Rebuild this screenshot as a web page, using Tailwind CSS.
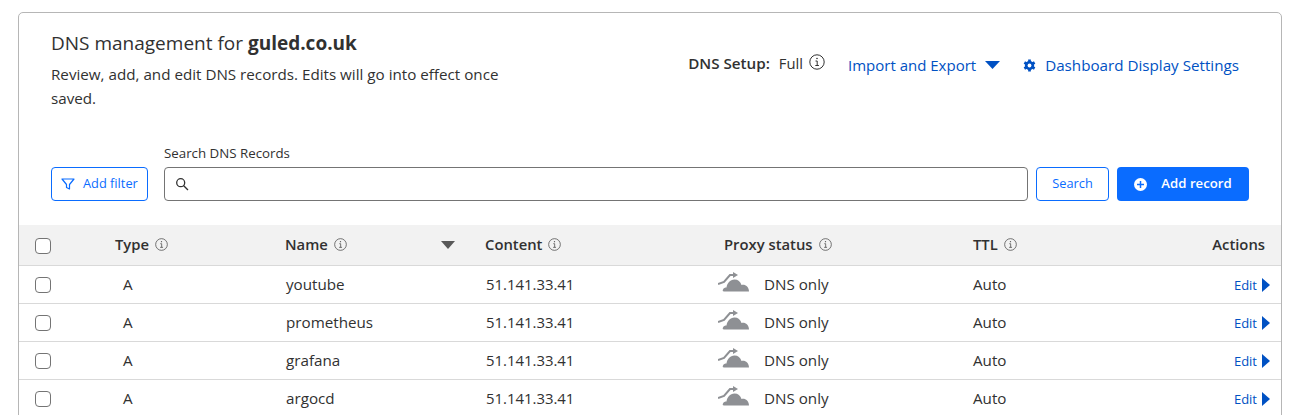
<!DOCTYPE html>
<html lang="en">
<head>
    <meta charset="UTF-8">
    <meta name="viewport" content="width=device-width, initial-scale=1.0">
    <title>DNS management</title>
    <script src="https://cdn.jsdelivr.net/npm/@tailwindcss/browser@4"></script>
</head>
<body class="bg-white h-[415px] overflow-hidden font-['Open_Sans',sans-serif] text-[#313131]">
    <div class="ml-[18px] mt-[12px] w-[1264px] h-[420px] border border-[#b6b6b6] rounded-[5px]">

        <!-- Header -->
        <div class="flex justify-between h-[122px] pl-[32px] pr-[42px] pt-[17px]">
            <div class="w-[480px]">
                <h1 class="text-[19px] leading-[26px]">DNS management for <b class="font-bold">guled.co.uk</b></h1>
                <p class="text-[15.2px] leading-[24px] mt-[6px]">Review, add, and edit DNS records. Edits will go into effect once saved.</p>
            </div>
            <div class="flex items-center h-[24px] mt-[23px] text-[15px] leading-[24px]">
                <div class="flex items-center gap-[9px] mb-[4px] mr-[23px]">
                    <span class="font-semibold text-[15.2px]">DNS Setup:</span>
                    <span class="flex items-center gap-[6px] text-[14.8px]">Full
                        <svg class="w-[16px] h-[16px] mb-[3px]" viewBox="0 0 16 16" fill="none" stroke="#313131"><circle cx="8" cy="8" r="7.2"/><path d="M6.5 7h1.700v4.500M6.300 11.500h3.600"/><circle cx="8" cy="4.500" r=".8" fill="#313131" stroke="none"/></svg>
                    </span>
                </div>
                <a class="flex items-center gap-[9px] mr-[23px] text-[#0051c3]">Import and Export
                    <svg class="w-[15px] h-[8px]" viewBox="0 0 15 8"><path d="M0 0h15L7.500 8z" fill="#0051c3"/></svg>
                </a>
                <a class="flex items-center gap-[9px] text-[15.2px] text-[#0051c3]">
                    <svg class="w-[13px] h-[13px]" viewBox="0 0 24 24">
                        <circle cx="12" cy="12" r="8.500" fill="#0051c3"/>
                        <path d="M12 1v22M2.500 6.500l19 11M2.500 17.500l19-11" stroke="#0051c3" stroke-width="5"/>
                        <circle cx="12" cy="12" r="3.500" fill="#fff"/>
                    </svg>
                    Dashboard Display Settings
                </a>
            </div>
        </div>

        <!-- Search bar -->
        <div class="flex items-end h-[66px] pl-[32px] pr-[32px] gap-[16px]">
            <button class="flex items-center gap-[8px] w-[97px] h-[34px] pl-[9px] border border-[#0a6cff] rounded-[4px] text-[#0a6cff] text-[12.8px]">
                <svg class="w-[14px] h-[14px]" viewBox="0 0 14 14" fill="none" stroke="#0a6cff" stroke-width="1.200"><path d="M1 2h12L8.500 7.500V12l-3-1.500v-3z" stroke-linejoin="round"/></svg>
                Add filter
            </button>
            <div class="flex-1">
                <label class="block text-[13.3px] leading-[16px] mb-[6px]">Search DNS Records</label>
                <div class="flex items-center h-[34px] pl-[10px] border border-[#747474] rounded-[4px]">
                    <svg class="w-[14px] h-[14px]" viewBox="0 0 14 14" fill="none" stroke="#313131" stroke-width="1.300"><circle cx="5.700" cy="5.700" r="4"/><path d="M8.700 8.700L13 13"/></svg>
                </div>
            </div>
            <div class="flex gap-[8px] -ml-[8px]">
                <button class="w-[73px] h-[34px] border border-[#0a6cff] rounded-[4px] text-[#0a6cff] text-[12.8px]">Search</button>
                <button class="flex items-center justify-center gap-[14px] w-[132px] h-[34px] bg-[#0a6cff] rounded-[4px] text-white text-[13.2px] font-semibold">
                    <svg class="w-[13px] h-[13px]" viewBox="0 0 13 13"><circle cx="6.500" cy="6.500" r="6.500" fill="#fff"/><path d="M6.500 3v7M3 6.500h7" stroke="#0a6cff" stroke-width="1.500"/></svg>
                    Add record
                </button>
            </div>
        </div>

        <!-- Table head -->
        <div class="flex items-center h-[41px] mt-[24px] bg-[#f2f2f2] border-b border-[#d9d9d9] text-[14.8px] font-semibold">
            <div class="w-[96px] pl-[16px] pt-[2px]"><span class="block w-[16px] h-[16px] border border-[#747474] rounded-[4px] bg-white"></span></div>
            <div class="w-[170px] flex items-center gap-[6px] pb-[1px]">Type <svg class="w-[13px] h-[13px]" viewBox="0 0 16 16" fill="none" stroke="#555"><circle cx="8" cy="8" r="7.200"/><path d="M6.500 7h1.700v4.500M6.300 11.500h3.600"/><circle cx="8" cy="4.500" r=".8" fill="#555" stroke="none"/></svg></div>
            <div class="w-[200px] flex items-center gap-[6px] pb-[1px]">Name <svg class="w-[13px] h-[13px]" viewBox="0 0 16 16" fill="none" stroke="#555"><circle cx="8" cy="8" r="7.200"/><path d="M6.500 7h1.700v4.500M6.300 11.500h3.600"/><circle cx="8" cy="4.500" r=".8" fill="#555" stroke="none"/></svg>
                <svg class="w-[14px] h-[8px] ml-auto mr-[30px]" viewBox="0 0 14 8"><path d="M0 0h14L7 8z" fill="#595959"/></svg>
            </div>
            <div class="w-[239px] flex items-center gap-[6px] pb-[1px]">Content <svg class="w-[13px] h-[13px]" viewBox="0 0 16 16" fill="none" stroke="#555"><circle cx="8" cy="8" r="7.200"/><path d="M6.500 7h1.700v4.500M6.300 11.500h3.600"/><circle cx="8" cy="4.500" r=".8" fill="#555" stroke="none"/></svg></div>
            <div class="w-[249px] flex items-center gap-[6px] pb-[1px]">Proxy status <svg class="w-[13px] h-[13px]" viewBox="0 0 16 16" fill="none" stroke="#555"><circle cx="8" cy="8" r="7.200"/><path d="M6.500 7h1.700v4.500M6.300 11.500h3.600"/><circle cx="8" cy="4.500" r=".8" fill="#555" stroke="none"/></svg></div>
            <div class="flex items-center gap-[6px] pb-[1px]">TTL <svg class="w-[13px] h-[13px]" viewBox="0 0 16 16" fill="none" stroke="#555"><circle cx="8" cy="8" r="7.200"/><path d="M6.500 7h1.700v4.500M6.300 11.500h3.600"/><circle cx="8" cy="4.500" r=".8" fill="#555" stroke="none"/></svg></div>
            <div class="ml-auto pr-[16px] pb-[1px]">Actions</div>
        </div>

        <!-- Rows, filled in below -->
        <div id="rows"></div>
    </div>

    <script>
        const names = ["youtube", "prometheus", "grafana", "argocd"];
        document.getElementById("rows").innerHTML = names.map(name => `
            <div class="flex items-center h-[38px] border-b border-[#d9d9d9] text-[15.2px]">
                <div class="w-[96px] pl-[16px]"><span class="block w-[16px] h-[16px] border border-[#747474] rounded-[4px]"></span></div>
                <div class="w-[170px] pl-[8px]">A</div>
                <div class="w-[200px] pl-[1px]">${name}</div>
                <div class="w-[239px] pl-[1px] text-[14.9px]">51.141.33.41</div>
                <div class="w-[249px] flex items-center gap-[14px] -ml-[6px] mr-[6px]">
                    <svg class="w-[32px] h-[20px] -mt-[5px]" viewBox="0 0 32 20">
                        <path d="M6 19.500c-1.500 0-1.500-1-1-2 .5-1.500 2-2 3.500-2 .5-4 3.500-8 8-8 3.500 0 6 2 7 5.500 .5 0 1-.2 1.500-.2 3 0 6 2.500 6 6.700z" fill="#8e9094"/>
                        <path d="M0 12l6-2 6-7h4" fill="none" stroke="#fff" stroke-width="3.600"/>
                        <path d="M0 12l6-2 6-7h4" fill="none" stroke="#8e9094" stroke-width="2"/>
                        <path d="M15 0l5 3-5 3z" fill="#8e9094"/>
                    </svg>
                    DNS only
                </div>
                <div>Auto</div>
                <div class="ml-auto pr-[11px] flex items-center gap-[5px] text-[13px] text-[#0051c3]"><span class="pt-[2px]">Edit</span> <svg class="w-[8px] h-[14px]" viewBox="0 0 8 14"><path d="M0 0l8 7-8 7z" fill="#0051c3"/></svg></div>
            </div>
        `).join("");
    </script>
</body>
</html>
